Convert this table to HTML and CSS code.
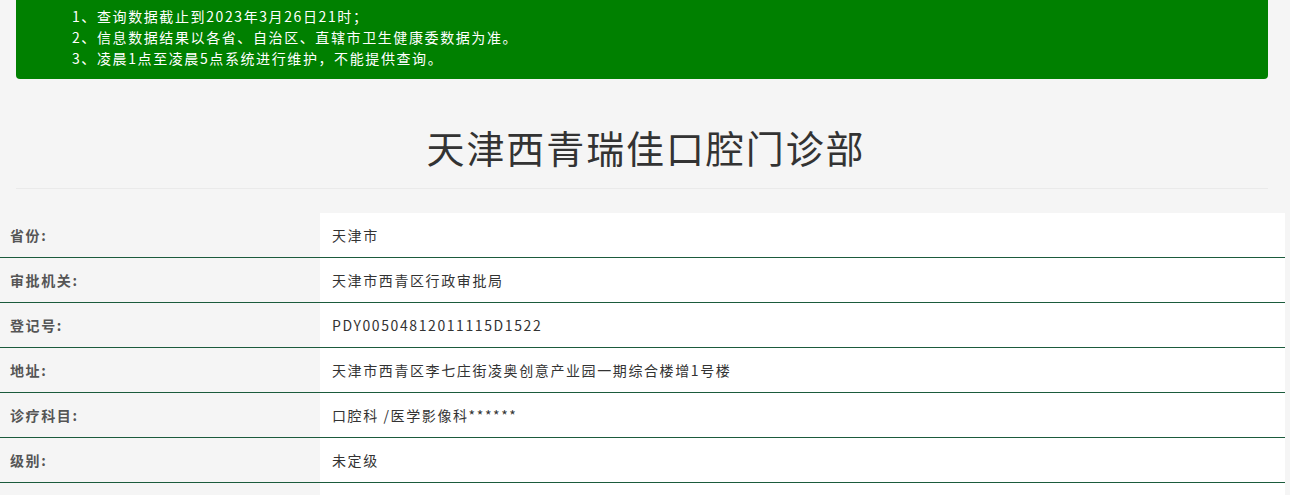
FILE: index.html
```html
<!DOCTYPE html>
<html lang="zh-CN">
<head>
<meta charset="utf-8">
<title>天津西青瑞佳口腔门诊部</title>
<link rel="stylesheet" href="styles.css">
</head>
<body>
<div class="notice">
  <p>1、查询数据截止到2023年3月26日21时；</p>
  <p>2、信息数据结果以各省、自治区、直辖市卫生健康委数据为准。</p>
  <p>3、凌晨1点至凌晨5点系统进行维护，不能提供查询。</p>
</div>
<h1 class="title">天津西青瑞佳口腔门诊部</h1>
<hr class="divider">
<table class="info">
  <tr><th>省份:</th><td>天津市</td></tr>
  <tr><th>审批机关:</th><td>天津市西青区行政审批局</td></tr>
  <tr><th>登记号:</th><td>PDY00504812011115D1522</td></tr>
  <tr><th>地址:</th><td>天津市西青区李七庄街凌奥创意产业园一期综合楼增1号楼</td></tr>
  <tr><th>诊疗科目:</th><td>口腔科 /医学影像科******</td></tr>
  <tr><th>级别:</th><td>未定级</td></tr>
  <tr><th>&nbsp;</th><td>&nbsp;</td></tr>
</table>
</body>
</html>
```
FILE: styles.css
```css
html, body {
  margin: 0;
  padding: 0;
  background: #f5f5f5;
  font-family: "Microsoft YaHei", "Noto Sans CJK SC", sans-serif;
  color: #333;
  letter-spacing: 0.1em;
}
.notice {
  background: #008000;
  color: #fff;
  margin: -4px 22px 0 16px;
  padding: 10px 16px 10px 56px;
  border-radius: 0 0 4px 4px;
  font-size: 14px;
  line-height: 21px;
}
.notice p {
  margin: 0;
}
.title {
  margin: 46px 0 0;
  text-align: center;
  font-size: 38px;
  font-weight: normal;
  line-height: 44px;
  letter-spacing: 0.05em;
  color: #333;
  padding-left: 2px;
}
.divider {
  margin: 19px 22px 0 16px;
  border: 0;
  border-top: 1px solid #eaeaea;
  height: 0;
}
.info {
  margin-top: 24px;
  width: 1285px;
  border-collapse: collapse;
  font-size: 14px;
}
.info th,
.info td {
  height: 44px;
  padding: 0;
  border-bottom: 1px solid #1b5b3c;
  vertical-align: middle;
  text-align: left;
}
.info th {
  width: 310px;
  padding-left: 10px;
  font-weight: bold;
  color: #555;
  background: #f5f5f5;
}
.info td {
  padding-left: 12px;
  background: #fff;
  color: #333;
}
```
